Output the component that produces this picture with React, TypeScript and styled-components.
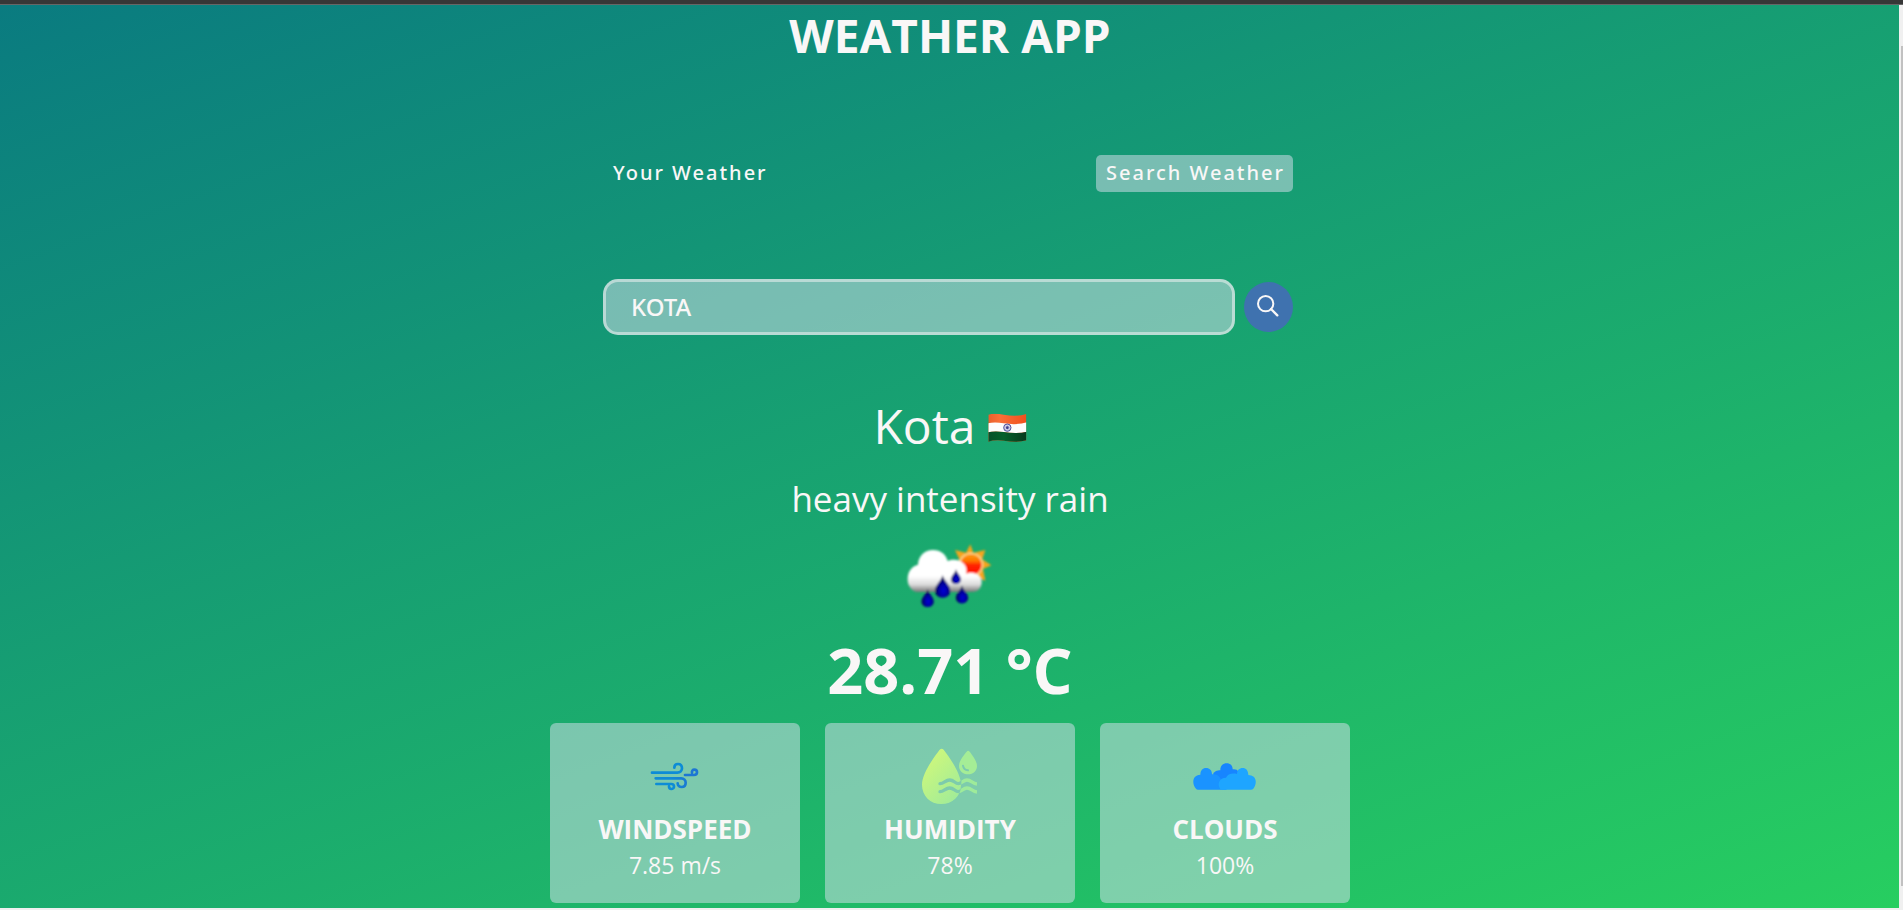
import React, { useState } from 'react';
import styled, { createGlobalStyle } from 'styled-components';

const LIGHT = '#f9f7f7';
const GLASS = 'rgba(219, 226, 239, 0.5)';
const ACCENT = '#3f72af';

const GlobalStyle = createGlobalStyle`
  *, *::before, *::after {
    box-sizing: border-box;
    margin: 0;
    padding: 0;
  }
  body {
    font-family: 'Open Sans', 'Noto Sans', sans-serif;
    color: ${LIGHT};
  }
`;

const Page = styled.div`
  min-height: 100vh;
  display: flex;
  flex-direction: column;
`;

const TopStrip = styled.div`
  height: 5px;
  background: #373737;
  border-bottom: 1px solid #666;
`;

const Body = styled.div`
  flex: 1;
  display: flex;
  border-bottom: 2px solid #f0f0f0;
`;

const Main = styled.main`
  flex: 1;
  min-width: 0;
  display: flex;
  flex-direction: column;
  align-items: center;
  padding: 0 0 5px 1px;
  background: linear-gradient(160deg, #0a7b80 0%, #27ce60 100%);
`;

const Rail = styled.div`
  width: 4px;
  padding: 41px 0 22px 2px;
  display: flex;
  background: #f0f0f0;
`;

const Thumb = styled.div`
  flex: 1;
  background: #c1c1c1;
`;

const Title = styled.h1`
  font-size: 46px;
  line-height: 60px;
  font-weight: 700;
  text-transform: uppercase;
`;

const Controls = styled.div`
  width: 100%;
  max-width: 694px;
  padding-right: 4px;
  margin-top: 90px;
`;

const Tabs = styled.nav`
  display: flex;
  justify-content: space-between;
`;

const Tab = styled.button<{ $active: boolean }>`
  height: 37px;
  padding: 0 8px 2px 10px;
  border: 0;
  border-radius: 5px;
  background: ${({ $active }) => ($active ? GLASS : 'transparent')};
  color: inherit;
  font-family: 'Noto Sans', 'Open Sans', sans-serif;
  font-size: 20px;
  font-weight: 500;
  letter-spacing: 2px;
  cursor: pointer;
`;

const SearchForm = styled.form`
  display: flex;
  align-items: center;
  gap: 9px;
  margin-top: 87px;
`;

const SearchInput = styled.input`
  flex: 1;
  min-width: 0;
  height: 56px;
  padding: 0 25px 2px;
  border: 3px solid rgba(249, 247, 247, 0.5);
  border-radius: 15px;
  background: ${GLASS};
  color: inherit;
  font-family: 'Noto Sans', 'Open Sans', sans-serif;
  font-size: 24px;
  font-weight: 500;
  outline: none;
`;

const SearchButton = styled.button`
  width: 49px;
  height: 50px;
  border: 0;
  border-radius: 50%;
  background: ${ACCENT};
  color: inherit;
  cursor: pointer;

  svg {
    display: block;
  }
`;

const Place = styled.h2`
  display: flex;
  align-items: center;
  gap: 12px;
  margin-top: 61px;
  font-size: 48px;
  line-height: 60px;
  font-weight: 400;
`;

const Description = styled.p`
  margin-top: 20px;
  font-size: 35px;
  line-height: 45px;
`;

const Temperature = styled.p`
  font-size: 63px;
  line-height: 75px;
  font-weight: 700;
`;

const Cards = styled.div`
  width: 100%;
  max-width: 800px;
  margin-top: 16px;
  display: grid;
  grid-template-columns: repeat(3, 1fr);
  gap: 25px;
`;

const Card = styled.section`
  display: flex;
  flex-direction: column;
  align-items: center;
  padding: 24px 16px 20px;
  border-radius: 6px;
  background: ${GLASS};
`;

const CardTitle = styled.h3`
  margin-top: 5px;
  font-size: 26px;
  line-height: 35px;
  font-weight: 700;
  text-transform: uppercase;
`;

const CardValue = styled.p`
  margin-top: 1px;
  font-size: 23px;
  line-height: 35px;
`;

const SearchIcon = () => (
  <svg width="49" height="50" viewBox="0 0 147 150" fill="none" stroke="currentColor" strokeWidth="6" strokeLinecap="round" aria-hidden="true">
    <circle cx="65" cy="65" r="23" />
    <path d="M81 81 L100 100" strokeWidth="7" />
  </svg>
);

const Flag = () => (
  <svg width="39" height="34" viewBox="617 58 117 102" role="img" aria-label="India">
    <defs>
      <clipPath id="flagShape">
        <path d="M618 75 Q636 69 664 75 Q704 82 732 73 V152 Q704 160 664 153 Q636 150 618 156 Z" />
      </clipPath>
      <linearGradient id="saffron" x1="0" x2="1">
        <stop offset="0" stopColor="#e8602c" />
        <stop offset="0.3" stopColor="#f96f37" />
        <stop offset="1" stopColor="#f04f1c" />
      </linearGradient>
      <linearGradient id="flagGreen" x1="0" x2="1">
        <stop offset="0" stopColor="#07502a" />
        <stop offset="0.4" stopColor="#04602b" />
        <stop offset="1" stopColor="#07381c" />
      </linearGradient>
    </defs>
    <g clipPath="url(#flagShape)">
      <rect x="617" y="68" width="117" height="90" fill="url(#saffron)" />
      <path d="M617 101 Q636 96 664 101 Q704 107 734 98 V126 Q704 134 664 127 Q636 123 617 128 Z" fill="#fdfdfd" />
      <path d="M617 128 Q636 123 664 127 Q704 134 734 126 V160 H617 Z" fill="url(#flagGreen)" />
    </g>
    <circle cx="675" cy="114" r="11" fill="#d9d8ec" stroke="#514f9b" strokeWidth="3" />
    <path d="M675 104 V124 M665 114 H685 M668 107 L682 121 M682 107 L668 121" stroke="#6f6db0" strokeWidth="1" />
    <circle cx="675" cy="114" r="4" fill="#403e8c" />
  </svg>
);

const Drop = ({ x, y, s }: { x: number; y: number; s: number }) => (
  <path
    transform={`translate(${x} ${y}) scale(${s})`}
    d="M0 -34 C3 -17 23 -4 23 13 C23 25 13 34 0 34 C-13 34 -23 25 -23 13 C-23 -4 -3 -17 0 -34 Z"
    fill="url(#dropBlue)"
  />
);

const RainIcon = () => (
  <svg width="120" height="111" viewBox="0 -27 360 333" role="img" aria-label="Rain with sun">
    <defs>
      <linearGradient id="cloudWhite" gradientUnits="userSpaceOnUse" x1="0" y1="60" x2="0" y2="186">
        <stop offset="0" stopColor="#fff" />
        <stop offset="0.62" stopColor="#fff" />
        <stop offset="0.82" stopColor="#dcdcdc" />
        <stop offset="1" stopColor="#777" />
      </linearGradient>
      <linearGradient id="sunRed" x1="0" y1="0" x2="0" y2="1">
        <stop offset="0" stopColor="#ff9a0a" />
        <stop offset="0.3" stopColor="#ff7a05" />
        <stop offset="0.55" stopColor="#ff1c05" />
        <stop offset="1" stopColor="#ff1500" />
      </linearGradient>
      <radialGradient id="dropBlue" cx="0.55" cy="0.68" r="0.55">
        <stop offset="0" stopColor="#0000d8" />
        <stop offset="0.5" stopColor="#0000a4" />
        <stop offset="1" stopColor="#04044c" />
      </radialGradient>
      <filter id="soft" x="-10%" y="-10%" width="120%" height="120%">
        <feGaussianBlur stdDeviation="3" />
      </filter>
    </defs>
    <g filter="url(#soft)">
      <path
        fill="#f7a51c"
        d="M241 43 L250 68 L286 60 L277 88 L304 106 L279 117 L286 152 L256 140 L210 120 L194 105 L208 88 L195 60 L228 68 Z"
      />
      <circle cx="243" cy="104" r="36" fill="#fbe3a0" />
      <circle cx="243" cy="104" r="32" fill="url(#sunRed)" />
      <path
        fill="url(#cloudWhite)"
        d="M78 186 C62 180 52 165 53 145 C54 124 66 108 84 104 C85 78 104 60 129 60 C152 60 168 73 173 93 C188 86 210 88 222 102 C230 112 230 120 229 131 C250 122 275 134 275 156 C275 174 264 186 246 186 Z"
      />
      <Drop x={113} y={204} s={0.8} />
      <Drop x={158} y={169} s={1} />
      <Drop x={216} y={193} s={0.8} />
      <Drop x={198} y={140} s={0.65} />
    </g>
  </svg>
);

const WindIcon = () => (
  <svg width="66" height="60" viewBox="306 96 198 180" fill="none" strokeWidth="8" strokeLinecap="round" aria-hidden="true">
    <defs>
      <linearGradient id="windBlue" gradientUnits="userSpaceOnUse" x1="390" x2="450" y1="0" y2="0">
        <stop offset="0" stopColor="#0f8bd6" />
        <stop offset="1" stopColor="#1b76d2" />
      </linearGradient>
    </defs>
    <path stroke="#0d8cd6" d="M336 173 H412 C421 173 426 167 426 160 C426 152 421 147 414 147 C407 147 403 152 403 158" />
    <path stroke="#1c76d3" d="M435 180 H462 C468 180 471 176 471 172 C471 167 467 164 463 164 C458 164 455 168 456 173" />
    <path stroke="url(#windBlue)" d="M347 190 H424 C432 190 437 196 437 203 C437 211 432 216 425 216 C418 216 413 211 413 205" />
    <path stroke="#0d8cd6" d="M349 207 H394 C399 207 402 211 402 215 C402 219 398 222 394 222 C390 222 387 219 387 214" />
  </svg>
);

const WAVE = 'M360 206 C372 206 376 195 389 195 C402 195 405 206 415 206 C426 206 429 195 441 195 C454 195 457 206 471 207';

const HumidityIcon = () => (
  <svg width="66" height="60" viewBox="291 96 198 180" aria-hidden="true">
    <defs>
      <linearGradient id="lime" gradientUnits="userSpaceOnUse" x1="315" y1="140" x2="430" y2="245">
        <stop offset="0" stopColor="#cdf77c" />
        <stop offset="1" stopColor="#9eeb9a" />
      </linearGradient>
      <clipPath id="outsideDrop">
        <path d="M424 180 H471 V245 H412 Q424 230 424 205 Z" />
      </clipPath>
      <mask id="waveCut" maskUnits="userSpaceOnUse" x="291" y="96" width="198" height="180">
        <rect x="291" y="96" width="198" height="180" fill="#fff" />
        <g fill="none" stroke="#000" strokeWidth="10" strokeLinecap="round">
          <path d={WAVE} />
          <path d={WAVE} transform="translate(0 24)" />
        </g>
      </mask>
    </defs>
    <path
      fill="url(#lime)"
      mask="url(#waveCut)"
      d="M359 104 Q365 98 371 104 C386 124 423 174 423 209 C423 244 397 267 364 267 C331 267 306 243 306 209 C306 174 344 124 359 104 Z"
    />
    <g clipPath="url(#outsideDrop)" fill="none" stroke="#9eeb9a" strokeWidth="10">
      <path d={WAVE} />
      <path d={WAVE} transform="translate(0 24)" />
    </g>
    <path fill="#a5ed96" d="M440 110 Q444 105 449 110 C456 119 471 138 471 152 C471 168 460 178 444 178 C429 178 417 168 417 152 C417 138 432 119 440 110 Z" />
    <path d="M429 152 Q431 165 444 166" fill="none" stroke="#7ccbae" strokeWidth="6" strokeLinecap="round" />
  </svg>
);

const CloudsIcon = () => (
  <svg width="66" height="60" viewBox="306 96 198 180" aria-hidden="true">
    <path fill="#1785ff" d="M370 190 V174 Q379 164 391 166 C391 152 399 145 410 145 C421 145 428 152 428 163 Q440 161 446 170 V200 H370 Z" />
    <path fill="#1a93ff" d="M318 221 C306 209 305 180 331 179 C331 166 338 159 348 159 C359 159 366 166 366 178 Q384 176 391 190 L410 224 H324 Q320 224 318 221 Z" />
    <path fill="#1ea5ff" d="M390 221 C381 205 388 189 408 188 C412 178 426 173 441 177 C441 166 448 159 458 159 C468 159 475 167 475 180 C501 180 502 206 490 221 Q487 224 483 224 H396 Q392 224 390 221 Z" />
  </svg>
);

const TABS = ['Your Weather', 'Search Weather'];

const STATS = [
  { name: 'Windspeed', value: '7.85 m/s', Icon: WindIcon },
  { name: 'Humidity', value: '78%', Icon: HumidityIcon },
  { name: 'Clouds', value: '100%', Icon: CloudsIcon },
];

export default function App() {
  const [tab, setTab] = useState('Search Weather');
  const [city, setCity] = useState('KOTA');

  return (
    <Page>
      <GlobalStyle />
      <TopStrip />
      <Body>
        <Main>
          <Title>Weather App</Title>
          <Controls>
            <Tabs>
              {TABS.map((name) => (
                <Tab key={name} type="button" $active={tab === name} onClick={() => setTab(name)}>
                  {name}
                </Tab>
              ))}
            </Tabs>
            <SearchForm onSubmit={(e) => e.preventDefault()}>
              <SearchInput aria-label="City" value={city} onChange={(e) => setCity(e.target.value)} />
              <SearchButton type="submit" aria-label="Search">
                <SearchIcon />
              </SearchButton>
            </SearchForm>
          </Controls>
          <Place>
            Kota
            <Flag />
          </Place>
          <Description>heavy intensity rain</Description>
          <RainIcon />
          <Temperature>28.71 °C</Temperature>
          <Cards>
            {STATS.map(({ name, value, Icon }) => (
              <Card key={name}>
                <Icon />
                <CardTitle>{name}</CardTitle>
                <CardValue>{value}</CardValue>
              </Card>
            ))}
          </Cards>
        </Main>
        <Rail>
          <Thumb />
        </Rail>
      </Body>
    </Page>
  );
}
